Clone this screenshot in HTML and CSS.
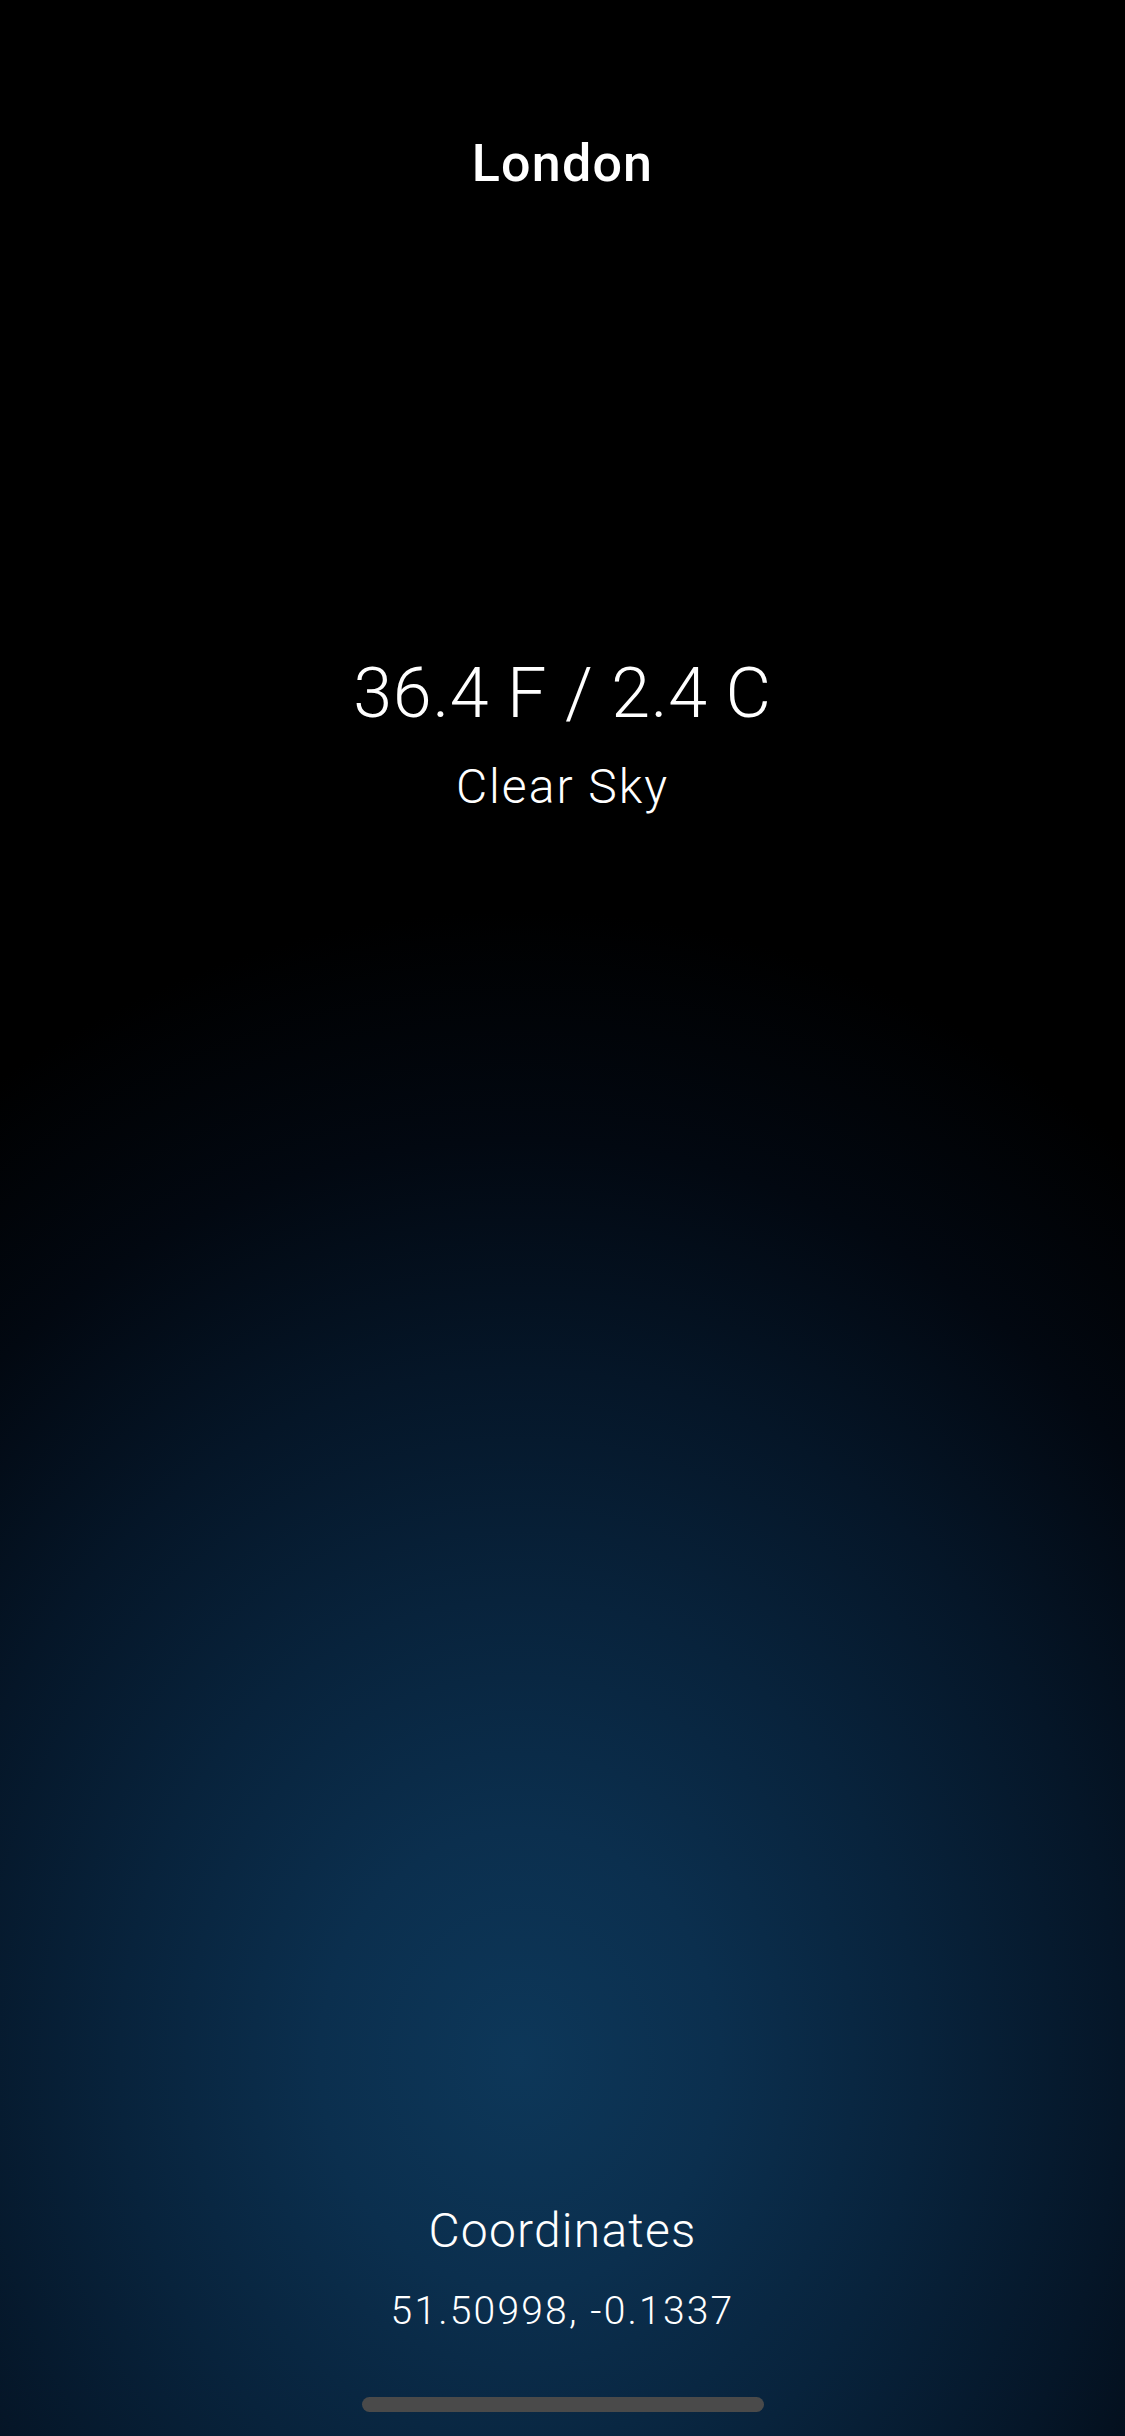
FILE: index.html
```html
<!DOCTYPE html>
<html lang="en">
<head>
<meta charset="utf-8">
<title>London Weather</title>
<link rel="stylesheet" href="styles.css">
</head>
<body>
<div class="screen">
  <header class="title">London</header>
  <section class="current">
    <div class="temp">36.4 F / 2.4 C</div>
    <div class="desc">Clear Sky</div>
  </section>
  <section class="coords">
    <div class="coords-label">Coordinates</div>
    <div class="coords-value">51.50998, -0.1337</div>
  </section>
  <div class="home-indicator"></div>
</div>
</body>
</html>
```

FILE: styles.css
```css
html, body {
  margin: 0;
  padding: 0;
  background: #000;
}
.screen {
  width: 1125px;
  height: 2436px;
  display: flex;
  flex-direction: column;
  align-items: center;
  color: #fff;
  font-family: Roboto, "Liberation Sans", sans-serif;
  background:
    radial-gradient(ellipse 1000px 1150px at 520px 2060px,
      #0d3759 0%, #0b2f4e 20%, #08233c 40%, #051628 60%, #020811 80%, #000 100%),
    #000;
  overflow: hidden;
}
.title {
  margin-top: 138px;
  font-size: 52px;
  line-height: 52px;
  font-weight: 500;
  letter-spacing: 1.2px;
}
.current {
  margin-top: 468px;
  display: flex;
  flex-direction: column;
  align-items: center;
  gap: 35px;
}
.temp {
  font-size: 70px;
  line-height: 70px;
  font-weight: 300;
  letter-spacing: 0.7px;
}
.desc {
  font-size: 48px;
  line-height: 48px;
  font-weight: 300;
  letter-spacing: 2px;
}
.coords {
  margin-top: auto;
  display: flex;
  flex-direction: column;
  align-items: center;
  gap: 37px;
}
.coords-label {
  font-size: 48px;
  line-height: 48px;
  font-weight: 300;
  letter-spacing: 1.2px;
}
.coords-value {
  font-size: 39px;
  line-height: 39px;
  font-weight: 300;
  letter-spacing: 2.2px;
}
.home-indicator {
  margin-top: 66px;
  margin-bottom: 24px;
  width: 402px;
  height: 15px;
  border-radius: 8px;
  background: #4a4a4a;
}
```
